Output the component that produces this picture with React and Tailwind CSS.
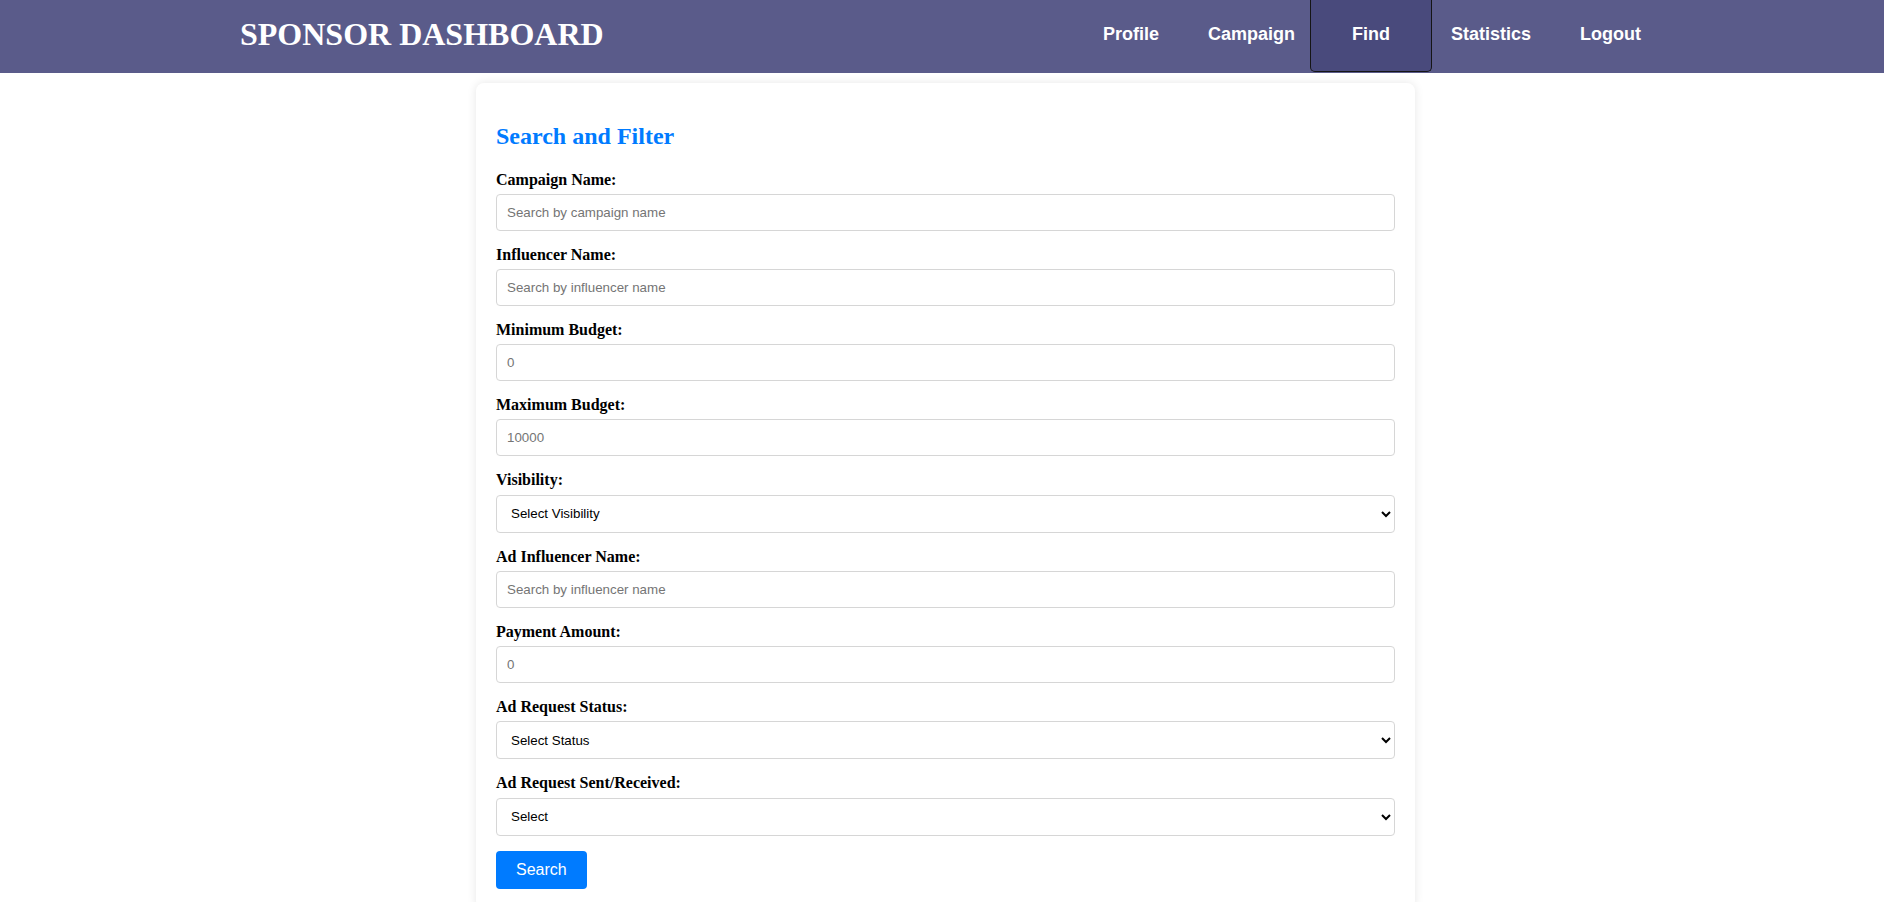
import React from "react";

const serif = { fontFamily: '"Liberation Serif", "Times New Roman", serif' };

function Field({ label, placeholder }) {
  return (
    <div>
      <label className="block mb-[5px] text-[16px] leading-[18.4px] font-bold text-black" style={serif}>
        {label}
      </label>
      <input
        type="text"
        placeholder={placeholder}
        className="block w-full h-[36.75px] mb-[15px] px-[10px] border border-[#d6d6d6] rounded-[4px] bg-white text-[13.333px] text-black placeholder:text-[#757575] outline-none font-['Liberation_Sans',Arial,sans-serif]"
      />
    </div>
  );
}

function SelectField({ label, options }) {
  return (
    <div>
      <label className="block mb-[5px] text-[16px] leading-[18.4px] font-bold text-black" style={serif}>
        {label}
      </label>
      <select
        defaultValue=""
        className="block w-full h-[38px] mb-[15px] px-[10px] border border-[#d6d6d6] rounded-[4px] bg-white text-[13.333px] text-black outline-none font-['Liberation_Sans',Arial,sans-serif]"
      >
        {options.map((o, i) => (
          <option key={i} value={i === 0 ? "" : o}>
            {o}
          </option>
        ))}
      </select>
    </div>
  );
}

export default function App() {
  return (
    <div className="min-h-[902px] bg-white">
      <header className="flex items-start h-[73px] bg-[#5a5b8a] pr-[243px]">
        <h1
          className="ml-[240px] h-[73px] pb-[5px] flex items-center text-[32px] font-bold text-white leading-none"
          style={serif}
        >
          SPONSOR DASHBOARD
        </h1>
        <nav className="ml-auto flex items-start h-[72px] text-[18px] font-bold text-white font-['Liberation_Sans',Arial,sans-serif]">
          <a className="h-[72px] pb-[3px] flex items-center" href="#">Profile</a>
          <a className="h-[72px] pb-[3px] flex items-center ml-[49px]" href="#">Campaign</a>
          <a
            className="h-[72px] w-[122px] pb-[3px] flex items-center justify-center ml-[15px] bg-[#494a7c] border border-t-0 border-[#151515] rounded-b-[5px]"
            href="#"
          >
            Find
          </a>
          <a className="h-[72px] pb-[3px] flex items-center ml-[19px]" href="#">Statistics</a>
          <a className="h-[72px] pb-[3px] flex items-center ml-[49px]" href="#">Logout</a>
        </nav>
      </header>

      <div className="ml-[476px] mt-[10px] w-[939px] bg-white rounded-[8px] shadow-[0_0_10px_rgba(0,0,0,0.1)] p-[20px]">
        <h2 className="mt-[20px] mb-[20px] text-[24px] leading-[27.6px] font-bold text-[#007bff]" style={serif}>
          Search and Filter
        </h2>
        <Field label="Campaign Name:" placeholder="Search by campaign name" />
        <Field label="Influencer Name:" placeholder="Search by influencer name" />
        <Field label="Minimum Budget:" placeholder="0" />
        <Field label="Maximum Budget:" placeholder="10000" />
        <SelectField label="Visibility:" options={["Select Visibility", "Public", "Private"]} />
        <Field label="Ad Influencer Name:" placeholder="Search by influencer name" />
        <Field label="Payment Amount:" placeholder="0" />
        <SelectField label="Ad Request Status:" options={["Select Status", "Pending", "Accepted", "Rejected"]} />
        <SelectField label="Ad Request Sent/Received:" options={["Select", "Sent", "Received"]} />
        <button className="h-[38px] px-[20px] rounded-[4px] bg-[#007bff] text-white text-[16px] font-['Liberation_Sans',Arial,sans-serif]">
          Search
        </button>
      </div>
    </div>
  );
}
